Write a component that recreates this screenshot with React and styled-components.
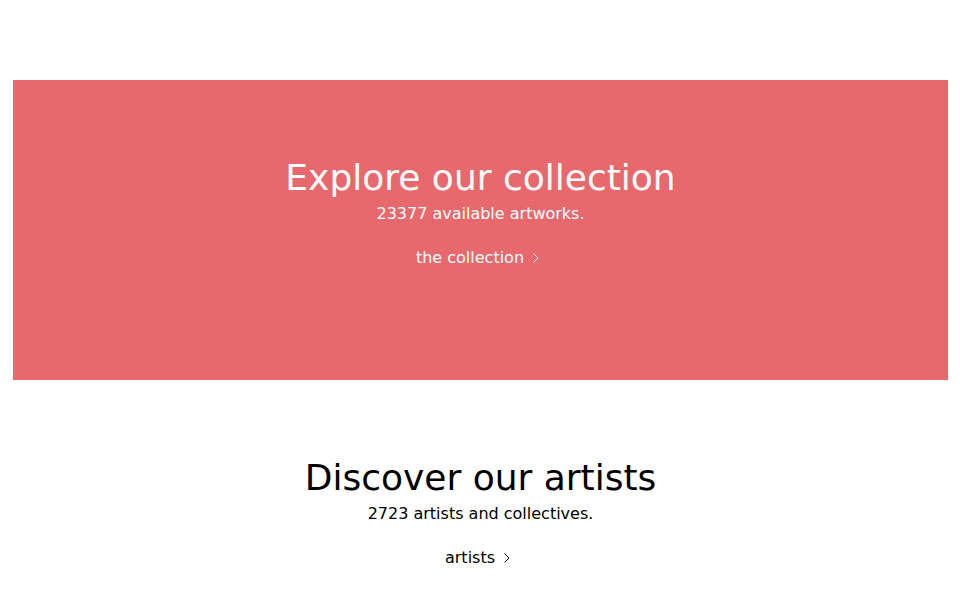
import React from "react";
import styled, { createGlobalStyle } from "styled-components";

const GlobalStyle = createGlobalStyle`
  body {
    margin: 0;
    background: #fff;
    font-family: "DejaVu Sans", sans-serif;
  }
`;

const Page = styled.div`
  padding-top: 80px;
`;

const Section = styled.section`
  height: 300px;
  margin: 0 12px 0 13px;
  padding-top: 78px;
  box-sizing: border-box;
  display: flex;
  flex-direction: column;
  align-items: center;
  background: ${(p) => (p.$accent ? "#e8696d" : "#fff")};
  color: ${(p) => (p.$accent ? "#fff" : "#000")};
`;

const Title = styled.h2`
  margin: 0;
  font-size: 36px;
  font-weight: 400;
  line-height: 40px;
`;

const Count = styled.p`
  margin: 4px 0 0;
  font-size: 16px;
  line-height: 24px;
`;

const Link = styled.a`
  margin-top: 20px;
  display: flex;
  align-items: center;
  gap: 9px;
  font-size: 16px;
  line-height: 24px;
  color: inherit;
  text-decoration: none;
`;

// chevron sits at the left of a 12px icon box
const Chevron = () => (
  <svg width="12" height="12" viewBox="0 0 12 12" fill="none">
    <path d="M0.5 1.5l4.5 4.5-4.5 4.5" stroke="currentColor" strokeWidth="1" />
  </svg>
);

const sections = [
  {
    title: "Explore our collection",
    count: "23377 available artworks.",
    link: "the collection",
    accent: true,
  },
  {
    title: "Discover our artists",
    count: "2723 artists and collectives.",
    link: "artists",
    accent: false,
  },
];

export default function App() {
  return (
    <Page>
      <GlobalStyle />
      {sections.map((s) => (
        <Section key={s.link} $accent={s.accent}>
          <Title>{s.title}</Title>
          <Count>{s.count}</Count>
          <Link href="#">
            {s.link}
            <Chevron />
          </Link>
        </Section>
      ))}
    </Page>
  );
}
